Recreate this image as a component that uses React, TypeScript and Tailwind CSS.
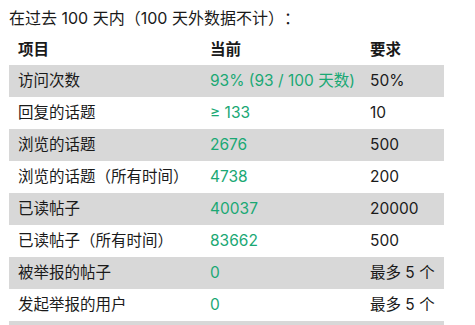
import React from "react";

interface Row {
  label: string;
  current: string;
  required: string;
}

const rows: Row[] = [
  { label: "访问次数", current: "93% (93 / 100 天数)", required: "50%" },
  { label: "回复的话题", current: "≥ 133", required: "10" },
  { label: "浏览的话题", current: "2676", required: "500" },
  { label: "浏览的话题（所有时间）", current: "4738", required: "200" },
  { label: "已读帖子", current: "40037", required: "20000" },
  { label: "已读帖子（所有时间）", current: "83662", required: "500" },
  { label: "被举报的帖子", current: "0", required: "最多 5 个" },
  { label: "发起举报的用户", current: "0", required: "最多 5 个" },
];

const App = () => {
  return (
    <div
      className="w-[475px] h-[325px] overflow-hidden bg-white text-[15.5px] text-[#1a1a1a] pl-[9px] [text-spacing-trim:space-all]"
      style={{ fontFamily: 'Inter, "Noto Sans CJK SC", sans-serif' }}
    >
      <p className="h-[34px] pt-[7px] leading-[22px] text-[16px]">在过去 100 天内（100 天外数据不计）：</p>
      <table className="w-[435px] border-collapse">
        <thead>
          <tr className="h-[31px] text-left">
            <th className="w-[192px] pl-[9px] font-bold">项目</th>
            <th className="w-[160px] pl-[9px] font-bold">当前</th>
            <th className="pl-[9px] font-bold">要求</th>
          </tr>
        </thead>
        <tbody>
          {rows.map((row, i) => (
            <tr key={row.label} className={i % 2 === 0 ? "h-[32px] bg-[#d8d8d8]" : "h-[32px] bg-white"}>
              <td className="pl-[9px]">{row.label}</td>
              <td className="pl-[9px] text-[#1aa874] whitespace-nowrap">{row.current}</td>
              <td className="pl-[9px] whitespace-nowrap">{row.required}</td>
            </tr>
          ))}
          <tr className="h-[32px] bg-[#d8d8d8]">
            <td colSpan={3}></td>
          </tr>
        </tbody>
      </table>
    </div>
  );
};

export default App;
